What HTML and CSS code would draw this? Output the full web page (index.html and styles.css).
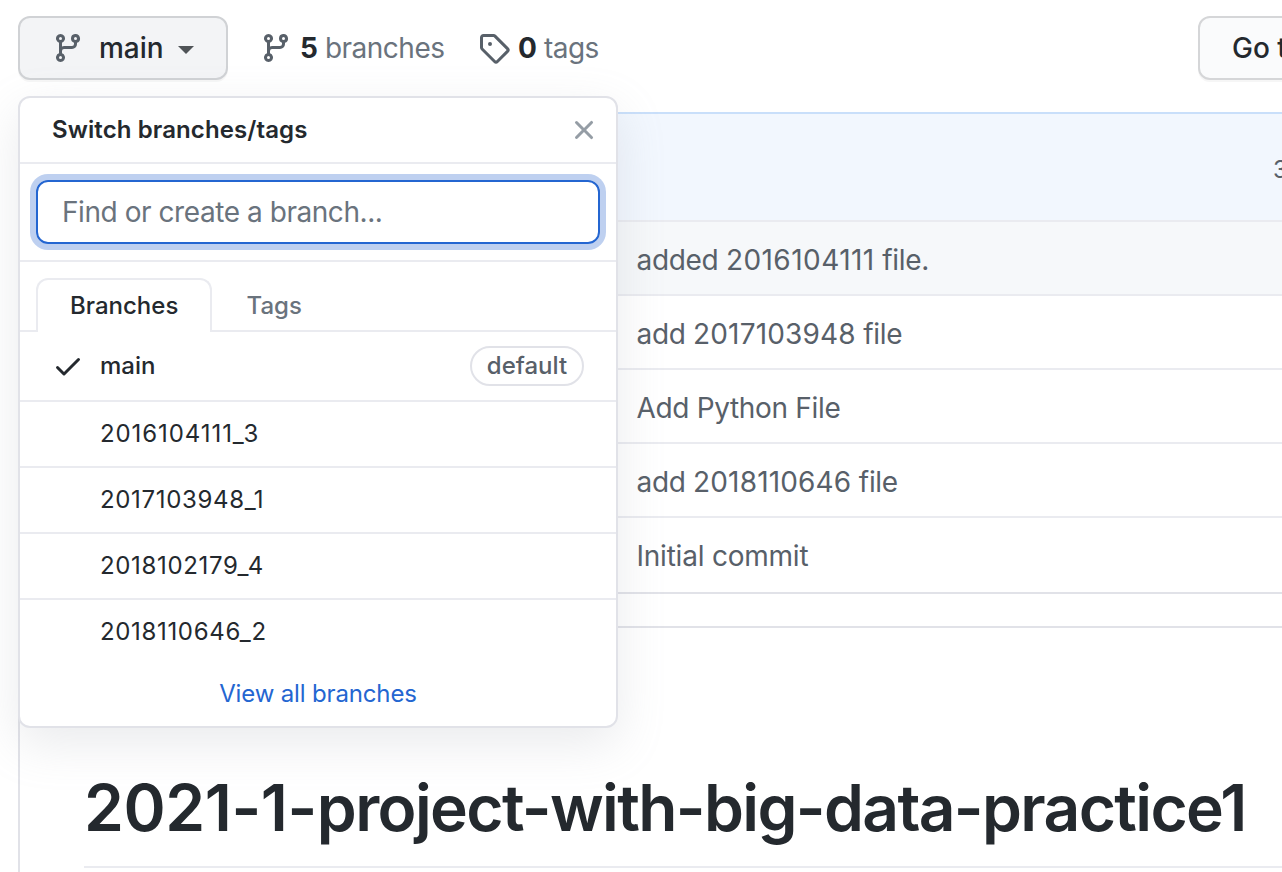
FILE: index.html
```html
<!DOCTYPE html>
<html lang="en">
<head>
<meta charset="utf-8">
<title>Switch branches/tags</title>
<link rel="stylesheet" href="styles.css">
</head>
<body>
<svg class="sprite" aria-hidden="true">
  <symbol id="branch" viewBox="0 0 16 16"><path fill-rule="evenodd" d="M11.75 2.5a.75.75 0 100 1.5.75.75 0 000-1.5zm-2.25.75a2.25 2.25 0 113 2.122V6A2.5 2.5 0 0110 8.5H6a1 1 0 00-1 1v1.128a2.251 2.251 0 11-1.5 0V5.372a2.25 2.25 0 111.5 0v1.836A2.492 2.492 0 016 7h4a1 1 0 001-1v-.628A2.25 2.25 0 019.5 3.25zM4.25 12a.75.75 0 100 1.5.75.75 0 000-1.5zM3.5 3.25a.75.75 0 111.5 0 .75.75 0 01-1.5 0z"/></symbol>
</svg>
<header class="toolbar">
  <button class="btn btn-branch"><svg class="icon"><use href="#branch"/></svg><span class="btn-label">main</span><span class="caret"></span></button>
  <a class="stat stat-branches"><svg class="icon"><use href="#branch"/></svg><b>5</b><span>branches</span></a>
  <a class="stat stat-tags"><svg class="icon" viewBox="0 0 16 16"><path fill-rule="evenodd" d="M2.5 7.775V2.75a.25.25 0 01.25-.25h5.025a.25.25 0 01.177.073l6.25 6.25a.25.25 0 010 .354l-5.025 5.025a.25.25 0 01-.354 0l-6.25-6.25a.25.25 0 01-.073-.177zm-1.5 0V2.75C1 1.784 1.784 1 2.75 1h5.025c.464 0 .91.184 1.238.513l6.25 6.25a1.75 1.75 0 010 2.474l-5.026 5.026a1.75 1.75 0 01-2.474 0l-6.25-6.25A1.75 1.75 0 011 7.775zM6 5a1 1 0 100 2 1 1 0 000-2z"/></svg><b>0</b><span>tags</span></a>
  <button class="btn btn-goto"><span>Go to file</span></button>
</header>
<main>
  <section class="commits">
    <div class="latest">3</div>
    <div class="commit commit-active"><span>added <span class="num">2016104111</span> file.</span></div>
    <div class="commit"><span>add <span class="num num-tight">2017103948</span> file</span></div>
    <div class="commit"><span>Add Python File</span></div>
    <div class="commit"><span>add <span class="num num-tight">2018110646</span> file</span></div>
    <div class="commit"><span>Initial commit</span></div>
  </section>
  <article class="readme"><h1><span class="title-num">2021-1-</span>project-with-big-data-practice1</h1></article>
</main>
<div class="menu">
  <div class="menu-head"><span>Switch branches/tags</span><svg class="icon close" viewBox="0 0 16 16"><path d="M3.72 3.72a.75.75 0 011.06 0L8 6.94l3.22-3.22a.75.75 0 111.06 1.06L9.06 8l3.22 3.22a.75.75 0 11-1.06 1.06L8 9.06l-3.22 3.22a.75.75 0 01-1.06-1.06L6.94 8 3.72 4.78a.75.75 0 010-1.06z"/></svg></div>
  <div class="search"><div class="field">Find or create a branch...</div></div>
  <div class="tabs"><div class="tab tab-on">Branches</div><div class="tab">Tags</div></div>
  <div class="item item-on"><svg class="icon" viewBox="0 0 16 16"><path d="M13.78 4.22a.75.75 0 010 1.06l-7.25 7.25a.75.75 0 01-1.06 0L2.22 9.28a.75.75 0 011.06-1.06L6 10.94l6.72-6.72a.75.75 0 011.06 0z"/></svg><span class="item-name">main</span><span class="label">default</span></div>
  <div class="item item-wide">2016104111_3</div>
  <div class="item">2017103948_1</div>
  <div class="item">2018102179_4</div>
  <div class="item">2018110646_2</div>
  <div class="all">View all branches</div>
</div>
</body>
</html>
```
FILE: styles.css
```css
* { box-sizing: border-box; }
html { overflow: hidden; }
body { margin: 0; width: 1282px; height: 872px; overflow: hidden; position: relative; background: #fff; color: #24292e; font-family: Inter, "Liberation Sans", sans-serif; font-size: 28px; white-space: nowrap; }
.sprite { display: none; }
.icon { width: 32px; height: 32px; fill: currentColor; flex: none; color: #586069; }
.toolbar { display: flex; align-items: center; padding: 16px 0 0 18px; height: 80px; }
.btn { display: flex; align-items: center; flex: none; height: 64px; padding: 0 32px; border: 2px solid #d5d6d8; border-radius: 12px; background: #fafbfc; box-shadow: 0 2px 0 rgba(27,31,35,.04); font: 500 28px Inter, "Liberation Sans", sans-serif; color: #24292e; }
.btn-branch { width: 210px; background: #f3f4f6; border-color: #d0d2d5; }
.btn-label { margin-left: 15px; }
.caret { margin: 3px 0 0 14px; border: 8px solid transparent; border-top-color: #4f5357; border-bottom: 0; }
.stat { display: flex; align-items: center; flex: none; color: #6a737d; letter-spacing: -.5px; }
.stat b { color: #24292e; font-weight: 650; margin: 0 7px 0 8px; letter-spacing: 0; }
.stat-branches { margin-left: 32px; width: 218px; }
.stat-tags { width: 720px; }
.commits { margin: 32px 0 0 18px; border: solid #e1e2e8; border-width: 0 0 2px 2px; color: #586069; letter-spacing: -.33px; }
.latest { height: 108px; background: #f2f7fe; border-top: 2px solid #c9dffa; padding: 41px 0 0 1253px; font-size: 24px; overflow: hidden; }
.commit { height: 74px; border-top: 2px solid #eaebf0; padding: 4px 0 0 616.5px; display: flex; align-items: center; }
.commit:last-child { height: 76px; padding-top: 2px; letter-spacing: -.22px; }
.commit-active { background: #f6f8fa; }
.num { letter-spacing: .45px; }
.num-tight { letter-spacing: .15px; }
.readme { margin: 32px 0 0 18px; height: 246px; border: 2px solid #e1e2e8; border-width: 2px 0 0 2px; padding: 130px 0 0 64px; }
h1 { margin: 0; font-size: 64px; font-weight: 640; letter-spacing: -1.62px; line-height: 80px; height: 110px; padding-top: 10px; border-bottom: 2px solid #eaebf0; }
.title-num { letter-spacing: -.4px; }
.menu { position: absolute; left: 18px; top: 96px; width: 600px; height: 632px; border: 2px solid #e1e2e8; border-radius: 12px; background: #fff; box-shadow: 0 16px 48px rgba(149,157,165,.2); font-size: 24px; }
.menu-head { display: flex; align-items: center; justify-content: space-between; height: 66px; padding: 0 16px 0 32px; border-bottom: 2px solid #eaebf0; font-weight: 600; letter-spacing: .1px; }
.menu-head span { padding-bottom: 2px; }
.close { color: #959da5; }
.search { height: 98px; padding: 16px; border-bottom: 2px solid #eaebf0; }
.field { height: 64px; border: 2px solid #2466d1; border-radius: 12px; box-shadow: 0 0 0 6px #bed0f0; display: flex; align-items: center; padding-left: 24px; font-size: 28px; letter-spacing: -.44px; color: #6a737d; }
.tabs { display: flex; height: 70px; padding: 16px 16px 0; border-bottom: 2px solid #eaebf0; font-weight: 500; color: #6a737d; }
.tab { height: 54px; display: flex; align-items: center; padding: 1px 34.5px 0; }
.tab-on { width: 176px; padding: 0 32px 2px; border: 2px solid #eaebf0; border-bottom: 0; border-radius: 12px 12px 0 0; background: #fff; color: #24292e; }
.item { display: flex; align-items: center; height: 66px; padding: 0 32px 2px 80px; border-bottom: 2px solid #eaebf0; letter-spacing: .66px; }
.item-wide { letter-spacing: .92px; }
.item-on { height: 70px; padding: 0 32px; font-weight: 500; letter-spacing: 0; }
.item-on .icon { color: #24292e; margin-right: 16px; }
.item-name { padding-bottom: 2px; }
.item:nth-last-child(2) { border-bottom-color: transparent; }
.label { margin-left: auto; height: 40px; width: 114px; padding-bottom: 2px; border: 2px solid #e1e2e8; border-radius: 20px; display: flex; align-items: center; justify-content: center; color: #586069; }
.all { text-align: center; color: #2466d1; line-height: 56px; letter-spacing: -.15px; }
```
